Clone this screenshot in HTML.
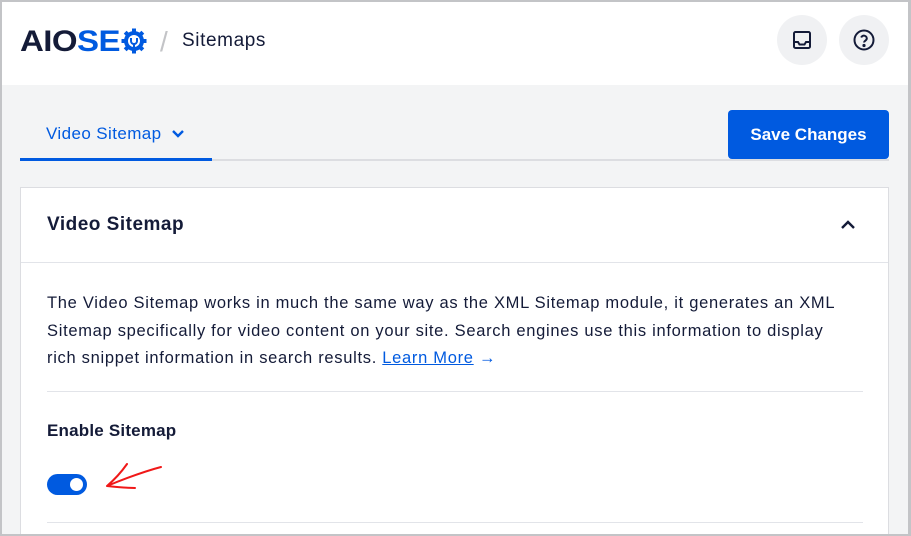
<!DOCTYPE html>
<html><head><style>
*{margin:0;padding:0;box-sizing:border-box}
html,body{width:911px;height:536px;overflow:hidden}
body{font-family:"Liberation Sans",sans-serif;color:#141b38;background:#f3f4f5;position:relative}
.frame{position:absolute;inset:0;border:2px solid #c3c4c7;border-right-width:3px;pointer-events:none;z-index:10}
.hdr{position:absolute;left:0;top:0;width:911px;height:85px;background:#fff}
.logo{position:absolute;left:20px;top:25px;font-weight:900;font-size:30px;letter-spacing:-0.5px;color:#141b38;transform:scaleX(1.1);transform-origin:0 0}
.logo b{color:#005ae0}
.slash{position:absolute;left:160px;top:26px;font-size:28px;color:#c3c4c7}
.crumb{position:absolute;left:182px;top:30px;font-size:19px;letter-spacing:.6px}
.ib{position:absolute;top:15px;width:50px;height:50px;border-radius:50%;background:#f0f1f3}
.tab{position:absolute;left:46px;top:124px;font-size:17px;color:#005ae0;letter-spacing:.4px}
.tabline{position:absolute;left:20px;top:159px;width:869px;height:2px;background:#dcdde1}
.tabact{position:absolute;left:20px;top:158px;width:192px;height:3px;background:#005ae0}
.btn{position:absolute;left:728px;top:110px;width:161px;height:49px;background:#005ae0;border-radius:4px;color:#fff;font-weight:bold;font-size:17px;text-align:center;line-height:49px}
.card{position:absolute;left:20px;top:187px;width:869px;height:349px;background:#fff;border:1px solid #dcdde1;border-bottom:none;overflow:hidden}
.ct{position:absolute;left:26px;top:26px;font-weight:bold;font-size:19px;letter-spacing:.5px}
.d{position:absolute;height:1px;background:#e2e4e9}
.p{position:absolute;left:26px;top:102px;white-space:nowrap;font-size:16.5px;line-height:27.5px;color:#141b38;letter-spacing:.7px}
.p a{color:#005ae0;text-decoration:underline}
.es{position:absolute;left:26px;top:233px;font-weight:bold;font-size:17px;letter-spacing:.2px}
.tg{position:absolute;left:26px;top:286px;width:40px;height:21px;border-radius:11px;background:#005ae0}
.tg i{position:absolute;right:4px;top:4px;width:13px;height:13px;border-radius:50%;background:#fff}
</style></head><body>
<div class="hdr">
<div class="logo">AIO<b>SE</b></div>
<svg style="position:absolute;left:121px;top:28px" width="26" height="26" viewBox="0 0 26 26"><circle cx="13" cy="13" r="10" fill="#005ae0"/><g fill="#005ae0"><rect x="11" y="0.5" width="4" height="5"/><rect x="11" y="20.5" width="4" height="5"/><rect x="0.5" y="11" width="5" height="4"/><rect x="20.5" y="11" width="5" height="4"/><rect x="11" y="0.5" width="4" height="5" transform="rotate(45 13 13)"/><rect x="11" y="20.5" width="4" height="5" transform="rotate(45 13 13)"/><rect x="0.5" y="11" width="5" height="4" transform="rotate(45 13 13)"/><rect x="20.5" y="11" width="5" height="4" transform="rotate(45 13 13)"/></g><circle cx="13" cy="13" r="6" fill="#fff"/><path d="M10 10v3a3 3 0 006 0v-3M13 16v4" stroke="#005ae0" stroke-width="2" fill="none"/></svg>
<div class="slash">/</div>
<div class="crumb">Sitemaps</div>
<div class="ib" style="left:777px"><svg style="position:absolute;left:15px;top:15px" width="20" height="20" viewBox="0 0 20 20" fill="none" stroke="#141b38" stroke-width="2"><rect x="2" y="2" width="16" height="16" rx="1.5"/><path d="M2 12h4l1.5 2.5h5L14 12h4"/></svg></div>
<div class="ib" style="left:839px"><svg style="position:absolute;left:13px;top:13px" width="24" height="24" viewBox="0 0 24 24" fill="none" stroke="#141b38" stroke-width="2"><circle cx="12" cy="12" r="9.5"/><path d="M9.2 9.5a2.9 2.9 0 015.6 1c0 2-2.8 2.3-2.8 4"/><circle cx="12" cy="17.5" r=".6" fill="#141b38"/></svg></div>
</div>
<div class="tab">Video Sitemap <svg width="14" height="10" viewBox="0 0 14 10" style="margin-left:4px"><path d="M2 2l5 5 5-5" stroke="#005ae0" stroke-width="2.4" fill="none"/></svg></div>
<div class="tabline"></div><div class="tabact"></div>
<div class="btn">Save Changes</div>
<div class="card">
<div class="ct">Video Sitemap</div>
<svg style="position:absolute;left:819px;top:31px" width="16" height="12" viewBox="0 0 16 12"><path d="M2 9l6-6 6 6" stroke="#141b38" stroke-width="2.4" fill="none"/></svg>
<div class="d" style="left:0;top:74px;width:867px"></div>
<div class="p">The Video Sitemap works in much the same way as the XML Sitemap module, it generates an XML<br>Sitemap specifically for video content on your site. Search engines use this information to display<br>rich snippet information in search results. <a>Learn More</a> <span style="color:#005ae0">→</span></div>
<div class="d" style="left:26px;top:203px;width:816px"></div>
<div class="es">Enable Sitemap</div>
<div class="tg"><i></i></div>
<div class="d" style="left:26px;top:334px;width:816px"></div>
</div>
<svg style="position:absolute;left:0;top:0;z-index:5" width="911" height="536"><path d="M161 467C142 472 124 479 107 486M127 464C120 474 114 480 107 486 116 487 126 488 135 488" stroke="#f01818" stroke-width="2" fill="none" stroke-linecap="round" stroke-linejoin="round"/></svg>
<div class="frame"></div>
</body></html>
